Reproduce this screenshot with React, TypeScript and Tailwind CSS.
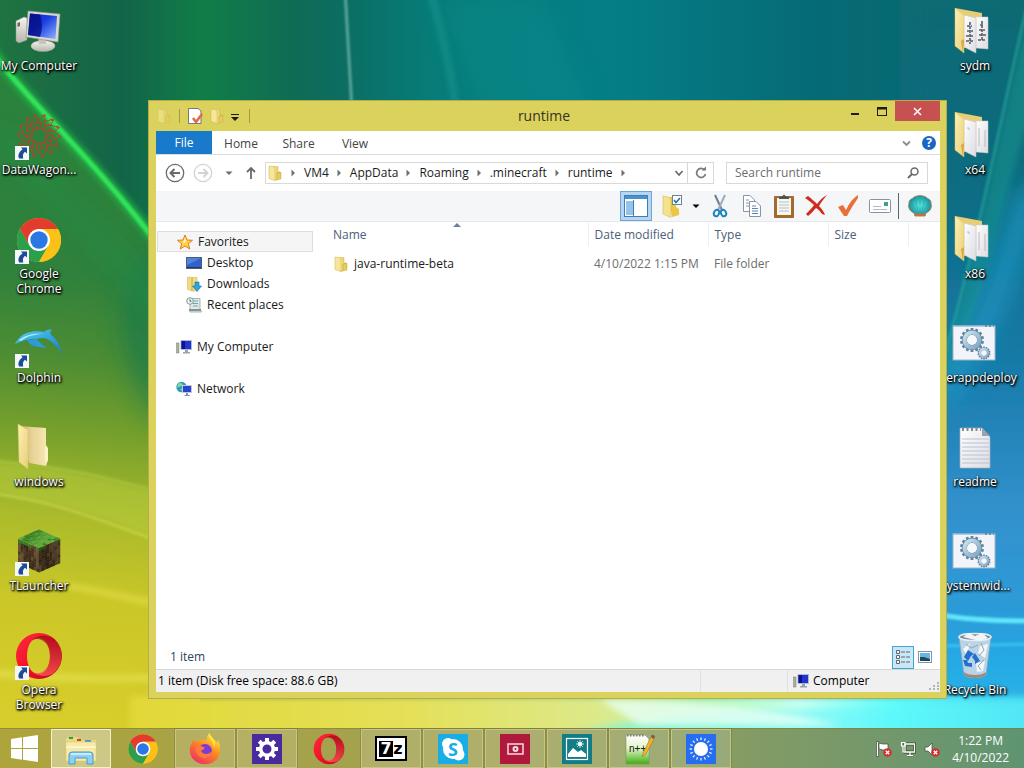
import { ReactNode } from "react";

type IconProps = { className?: string }

function Gradients() {
  return <svg width="0" height="0" className="absolute" aria-hidden="true">
    <defs>
      <linearGradient id="paper" x1="0" y1="0" x2="1" y2="1"><stop offset="0" stopColor="#ffffff" /><stop offset="1" stopColor="#dcdce2" /></linearGradient>
      <linearGradient id="flap" x1="0" y1="0" x2="1" y2="1"><stop offset="0" stopColor="#fdf1b4" /><stop offset="1" stopColor="#e9ce78" /></linearGradient>
      <linearGradient id="inner" x1="0" y1="0" x2="1" y2="0"><stop offset="0" stopColor="#cfb26c" /><stop offset="0.5" stopColor="#e9d499" /><stop offset="1" stopColor="#f7e9b5" /></linearGradient>
      <linearGradient id="tab" x1="0" y1="0" x2="1" y2="0"><stop offset="0" stopColor="#f7eaa2" /><stop offset="1" stopColor="#e0c24c" /></linearGradient>
      <linearGradient id="screen" x1="0" y1="0" x2="1" y2="1"><stop offset="0" stopColor="#0a1fae" /><stop offset="0.45" stopColor="#1c3fe0" /><stop offset="1" stopColor="#8fb6ff" /></linearGradient>
      <linearGradient id="metal" x1="0" y1="0" x2="0" y2="1"><stop offset="0" stopColor="#f6f6f2" /><stop offset="1" stopColor="#b5b5aa" /></linearGradient>
      <linearGradient id="opera" x1="0" y1="0" x2="1" y2="1"><stop offset="0" stopColor="#ff2a3c" /><stop offset="0.5" stopColor="#f3122a" /><stop offset="1" stopColor="#b00716" /></linearGradient>
      <linearGradient id="operaInner" x1="0" y1="0" x2="0" y2="1"><stop offset="0" stopColor="#9c0a14" /><stop offset="1" stopColor="#ff5b58" /></linearGradient>
      <linearGradient id="dolphin" x1="0" y1="0" x2="1" y2="1"><stop offset="0" stopColor="#53d0f5" /><stop offset="1" stopColor="#1a7bc4" /></linearGradient>
      <linearGradient id="cog" x1="0" y1="0" x2="1" y2="1"><stop offset="0" stopColor="#cfe2ee" /><stop offset="1" stopColor="#7ea6c2" /></linearGradient>
      <linearGradient id="fire" x1="0.8" y1="0" x2="0.2" y2="1"><stop offset="0" stopColor="#fff04a" /><stop offset="0.45" stopColor="#ff8a1f" /><stop offset="1" stopColor="#f02a6a" /></linearGradient>
      <linearGradient id="npp" x1="0" y1="0" x2="0" y2="1"><stop offset="0" stopColor="#ffffff" /><stop offset="0.45" stopColor="#e4f5cc" /><stop offset="1" stopColor="#3fae10" /></linearGradient>
      <radialGradient id="shell"><stop offset="0" stopColor="#58f0e4" /><stop offset="1" stopColor="#168f9c" /></radialGradient>
    </defs>
  </svg>;
}

function Wallpaper() {
  return <svg className="absolute inset-0 w-full h-full" viewBox="0 0 1024 768" preserveAspectRatio="none" aria-hidden="true">
    <defs>
      <linearGradient id="wpTop" x1="0" y1="0" x2="1" y2="0">
        <stop offset="0" stopColor="#1f7340" /><stop offset="0.12" stopColor="#126448" />
        <stop offset="0.2" stopColor="#107e48" /><stop offset="0.29" stopColor="#0f6b54" /><stop offset="0.34" stopColor="#0b6e64" />
        <stop offset="0.42" stopColor="#077c78" /><stop offset="0.6" stopColor="#057e86" />
        <stop offset="0.8" stopColor="#066a74" /><stop offset="1" stopColor="#0d6870" />
      </linearGradient>
      <linearGradient id="wpLeft" gradientUnits="userSpaceOnUse" x1="60" y1="60" x2="0" y2="768">
        <stop offset="0" stopColor="#2a823c" /><stop offset="0.3" stopColor="#2f813c" />
        <stop offset="0.42" stopColor="#4e8d33" /><stop offset="0.52" stopColor="#76a02c" />
        <stop offset="0.64" stopColor="#abbb2b" /><stop offset="0.76" stopColor="#cbc728" /><stop offset="1" stopColor="#ddd02c" />
      </linearGradient>
      <linearGradient id="wpRight" x1="0" y1="0" x2="0" y2="1">
        <stop offset="0" stopColor="#0d6a72" /><stop offset="0.25" stopColor="#0e6c80" />
        <stop offset="0.45" stopColor="#1478a4" /><stop offset="0.65" stopColor="#3290cc" />
        <stop offset="0.8" stopColor="#2b9dda" /><stop offset="0.83" stopColor="#24a8e4" /><stop offset="1" stopColor="#35c0ea" />
      </linearGradient>
      <linearGradient id="wpBottom" x1="0" y1="0" x2="1" y2="0">
        <stop offset="0" stopColor="#e2d838" /><stop offset="0.3" stopColor="#e4e058" />
        <stop offset="0.5" stopColor="#dde98a" /><stop offset="0.62" stopColor="#b6f7b4" />
        <stop offset="0.72" stopColor="#c4fff0" /><stop offset="0.82" stopColor="#5ffcfa" /><stop offset="1" stopColor="#40cdee" />
      </linearGradient>
      <filter id="soft1" filterUnits="userSpaceOnUse" x="-50" y="-50" width="1124" height="868"><feGaussianBlur stdDeviation="1" /></filter>
      <filter id="soft3" filterUnits="userSpaceOnUse" x="-50" y="-50" width="1124" height="868"><feGaussianBlur stdDeviation="3" /></filter>
      <filter id="soft12" filterUnits="userSpaceOnUse" x="-50" y="-50" width="1124" height="868"><feGaussianBlur stdDeviation="12" /></filter>
    </defs>
    <rect width="1024" height="768" fill="url(#wpTop)" />
    <path d="M-20 40 C40 115 100 175 160 250 L200 290 V790 H-20Z" fill="url(#wpLeft)" />
    <path d="M160 250 C120 260 100 330 160 430Z" fill="#1f7a48" filter="url(#soft12)" opacity="0.8" />
    <rect x="900" y="-20" width="160" height="808" fill="url(#wpRight)" filter="url(#soft12)" />
    <path d="M130 696 H1060 V790 H130Z" fill="url(#wpBottom)" filter="url(#soft3)" />
    <path d="M345 -10 L352 110" stroke="#7bbdb0" strokeWidth="3" fill="none" filter="url(#soft1)" opacity="0.7" />
    <path d="M430 -10 C445 40 452 80 458 120" stroke="#2fa9a0" strokeWidth="4" fill="none" filter="url(#soft3)" opacity="0.6" />
    <path d="M545 0 L590 110 H480 L440 0Z" fill="#0b9092" filter="url(#soft12)" opacity="0.35" />
    <path d="M-10 48 C30 105 90 155 160 246" stroke="#22b045" strokeWidth="10" fill="none" filter="url(#soft3)" />
    <path d="M-10 50 C30 103 90 155 160 247" stroke="#33e458" strokeWidth="5" fill="none" filter="url(#soft1)" />
    <path d="M0 130 C50 200 100 230 160 310" stroke="#22904a" strokeWidth="14" fill="none" filter="url(#soft12)" opacity="0.7" />
    <path d="M-20 460 C60 465 110 480 170 495 V545 C100 515 50 500 -20 492Z" fill="#b9cd3c" filter="url(#soft3)" opacity="0.5" />
    <path d="M-20 492 C60 500 110 525 170 545" stroke="#d3de52" strokeWidth="3" fill="none" filter="url(#soft1)" opacity="0.45" />
    <path d="M-20 460 C60 465 110 478 170 495" stroke="#bdd14e" strokeWidth="2" fill="none" filter="url(#soft1)" opacity="0.45" />
    <path d="M60 585 C100 590 130 600 170 605" stroke="#e6e24a" strokeWidth="5" fill="none" filter="url(#soft3)" opacity="0.8" />
    <path d="M-20 672 C60 680 110 678 170 678" stroke="#e6e452" strokeWidth="6" fill="none" filter="url(#soft3)" opacity="0.8" />
    <path d="M1030 10 C1000 120 985 230 945 350 V380 C990 300 1005 180 1030 120Z" fill="#17928c" filter="url(#soft3)" opacity="0.6" />
    <path d="M1026 10 C1000 120 985 210 945 355" stroke="#27a79a" strokeWidth="3" fill="none" filter="url(#soft1)" opacity="0.6" />
    <path d="M1030 190 C1005 280 985 330 940 400" stroke="#1d99c8" strokeWidth="18" fill="none" filter="url(#soft12)" />
    <path d="M940 615 C970 620 1000 621 1030 621" stroke="#62e6fa" strokeWidth="5" fill="none" filter="url(#soft1)" />
    <path d="M940 646 L1030 644" stroke="#38bff2" strokeWidth="3" fill="none" filter="url(#soft1)" />
    <path d="M560 735 C690 705 780 715 1030 700 V735Z" fill="#5df6fb" filter="url(#soft3)" opacity="0.5" />
    <path d="M600 700 C680 700 760 706 840 725 H640Z" fill="#e8fff6" filter="url(#soft3)" opacity="0.8" />
  </svg>;
}

function Shortcut() {
  return <svg className="absolute left-0 bottom-0 w-3.5 h-3.5" viewBox="0 0 14 14">
    <rect width="14" height="14" fill="#f5f8fb" />
    <path d="M6 1.500 H12 V7.500 L10 5.800 C8 7.500 7.500 9.500 8.300 12.500 H4 C2.600 9 4 5.500 7.600 3.400Z" fill="#1c4c96" />
  </svg>;
}

function ComputerIcon({ className }: IconProps) {
  return <svg className={className} viewBox="0 0 48 48">
    <path d="M1 13 L9 9 L12 10 V32 L4 35 L1 33Z" fill="url(#metal)" stroke="#99998f" strokeWidth="0.5" />
    <path d="M2.500 15 L5 14 V18 L2.500 19Z" fill="#68685f" />
    <ellipse cx="28" cy="38" rx="12" ry="5.500" fill="url(#metal)" stroke="#aaaaa0" strokeWidth="0.5" />
    <path d="M23 28 L31 29 V36 H24Z" fill="#c4c4ba" />
    <path d="M13 3 L45 6 L43 34 L11 29Z" fill="#d8d8d0" stroke="#96968e" strokeWidth="0.6" />
    <path d="M15 5.500 L42 8 L40.500 31 L13 27Z" fill="url(#screen)" />
    <path d="M15 5.500 L25 6.500 Q29 18 25 29 L13 27Z" fill="#040c80" opacity="0.75" />
  </svg>;
}

function DataWagonIcon({ className }: IconProps) {
  const spokes = Array.from({ length: 14 }, (_, i) => i * 26);
  return <svg className={className} viewBox="0 0 48 48" fill="none" stroke="#b8402c" strokeWidth="0.800">
    {spokes.map((a) => <g key={a} transform={`rotate(${a} 24 24)`}>
      <path d="M24 17 L19 12 L23 8 L20 3 M23 8 L28 4 M24 17 L27 11 L31 9" />
      <circle cx="20" cy="3" r="1" fill="#b8402c" stroke="none" />
      <circle cx="28" cy="4" r="1" fill="#b8402c" stroke="none" />
      <circle cx="19" cy="12" r="1" fill="#b8402c" stroke="none" />
    </g>)}
    <circle cx="24" cy="24" r="7" strokeWidth="1" strokeDasharray="5 2" />
  </svg>;
}

function ChromeIcon({ className }: IconProps) {
  return <svg className={className} viewBox="0 0 48 48">
    <circle cx="24" cy="24" r="22" fill="#fbc116" />
    <path d="M4.950 13 A22 22 0 0 1 43.050 13 H24 L14.470 29.500Z" fill="#e33b2e" />
    <path d="M4.950 13 A22 22 0 0 0 24 46 L33.500 29.500 L24 35 L14.470 29.500Z" fill="#2b9f4b" />
    <path d="M24 46 A22 22 0 0 0 43.050 13 H24 L33.500 29.500Z" fill="#fbc116" />
    <circle cx="24" cy="24" r="11" fill="#ffffff" />
    <circle cx="24" cy="24" r="8.700" fill="#2b78e4" />
  </svg>;
}

function DolphinIcon({ className }: IconProps) {
  return <svg className={className} viewBox="0 -8 48 48">
    <path d="M0 16 C3 10 8 6 13 4.500 C19 3 25 3 29 4 C31 2 34 1 37 2 C35 3 35 5 36 7 C42 11 45 17 47 27 C43 19 38 14 32 11 C28 9.500 25 10 22 11 C15 10 7 13 0 16Z" fill="url(#dolphin)" />
    <path d="M4 12 C12 6 20 5 29 6 C20 6 12 8 6 13Z" fill="#b5ecff" />
    <path d="M12 12 C15 18 21 19 32 20 C27 17 25 14 21 11Z" fill="#2e9bd9" />
  </svg>;
}

function OpenFolderIcon({ className }: IconProps) {
  return <svg className={className} viewBox="0 0 48 48">
    <path d="M4 2 L31 4 V21 L33 24 V36 L31 42 L14 39Z" fill="url(#inner)" />
    <path d="M30 22 L33 25 V37 L30 38Z" fill="#fbf2c8" />
    <path d="M3 0 L13 6 V45 L4 38Z" fill="url(#flap)" stroke="#d9be68" strokeWidth="0.5" />
  </svg>;
}

function StuffedFolderIcon({ className, pictures }: IconProps & { pictures?: boolean }) {
  return <svg className={className} viewBox="0 0 48 48">
    <path d="M4 0 L31 5 V12 L14 40 L4 38Z" fill="#e8cd77" />
    <path d="M25 9 L37 9 V41 L25 40Z" fill="url(#paper)" stroke="#cccccc" strokeWidth="0.5" />
    <path d="M13 7 L25 10 V45 L13 39Z" fill="url(#paper)" stroke="#c2c2c2" strokeWidth="0.5" />
    {pictures ? <path d="M19 14 V36 M16 18 h5 M16 23 h6 M15 28 h7 M15 33 h8 M31 13 V33 M29 17 h4 M28 22 h6 M28 27 h7 M27 32 h8" stroke="#585d62" strokeWidth="1.600" strokeDasharray="3 1" fill="none" /> : <path d="M17 15 v2 h2 M28 16 v18 M34 18 v17" stroke="#b9b9c0" fill="none" />}
    <path d="M4 0 L13 7 V45 L4 38Z" fill="url(#flap)" stroke="#dcc26a" strokeWidth="0.5" />
    <path d="M13 31 L10 33 L12 45Z" fill="#dca73b" />
  </svg>;
}

const mud = Array.from({ length: 64 }, (_, i) => ({ x: i % 8, y: Math.floor(i / 8), n: (i * i * 7 + i * 13 + Math.floor(i / 5)) % 5 }));
const grassColors = ["#3f8a2e", "#5dab3f", "#4b9a36", "#357a28", "#5aa442"];
const mudColors = ["#4b3726", "#5f4732", "#38291c", "#67503a", "#43311f"];

function GrassBlockIcon({ className }: IconProps) {
  return <svg className={className} viewBox="0 0 48 48">
    <g transform="matrix(2.625 1.125 0 3 3 11)">{mud.map(({ x, y, n }) => <rect key={y * 8 + x} x={x} y={y} width="1.100" height="1.100" fill={y + n % 2 < 1 ? grassColors[3] : mudColors[n]} />)}</g>
    <g transform="matrix(2.625 -1.125 0 3 24 20)">{mud.map(({ x, y, n }) => <rect key={y * 8 + x} x={x} y={y} width="1.100" height="1.100" fill={y + n % 3 < 1 ? "#2d661f" : mudColors[(n + 2) % 5]} />)}</g>
    <g transform="matrix(2.625 1.125 -2.625 1.125 24 1.500)">{mud.map(({ x, y, n }) => <rect key={y * 8 + x} x={x} y={y} width="1.100" height="1.100" fill={grassColors[n]} />)}</g>
    <path d="M24 20 L45 11 V35 L24 45Z" fill="#000000" opacity="0.2" />
  </svg>;
}

function OperaIcon({ className }: IconProps) {
  return <svg className={className} viewBox="0 0 48 48">
    <path fillRule="evenodd" d="M24 1 A23 23 0 1 0 24 47 A23 23 0 1 0 24 1Z M24 6 C31 6 35 14 35 24 C35 34 31 42 24 42 C16 42 12 34 12 24 C12 14 16 6 24 6Z" fill="url(#opera)" />
    <path d="M17 8 C24 2 33 3 39 7 A23 23 0 0 1 39 41 C33 45 24 45 17 40 C26 44 35 37 35 24 C35 11 26 4 17 8Z" fill="url(#operaInner)" opacity="0.75" />
  </svg>;
}

function Gear({ cx, cy, r }: { cx: number, cy: number, r: number }) {
  const teeth = Array.from({ length: 14 }, (_, i) => i * 360 / 14);
  return <g transform={`translate(${cx} ${cy})`}>
    {teeth.map((a) => <rect key={a} x={-r * 0.12} y={-r} width={r * 0.24} height={r * 0.4} transform={`rotate(${a})`} fill="#5f87a2" />)}
    <circle r={r * 0.62} fill="none" stroke="#5f87a2" strokeWidth={r * 0.46} />
    <circle r={r * 0.62} fill="none" stroke="url(#cog)" strokeWidth={r * 0.34} />
    <circle r={r * 0.42} fill="#f6f9fc" />
  </g>;
}

function BatchIcon({ className }: IconProps) {
  return <svg className={className} viewBox="0 0 48 48">
    <rect x="2" y="6" width="42" height="34" fill="#f3f4fa" stroke="#9fb4c4" />
    <path d="M2 6 H44" stroke="#9ac0da" />
    <path d="M34 6 h2 M38 6 h2 M42 6 h1" stroke="#4b5c70" strokeWidth="1" />
    <Gear cx={21} cy={20} r={12} />
    <Gear cx={33} cy={33} r={6.500} />
  </svg>;
}

function TextFileIcon({ className }: IconProps) {
  return <svg className={className} viewBox="0 0 48 48">
    <path d="M9 4 H31 L39 13 V44 H9Z" fill="url(#paper)" stroke="#a8aeb8" strokeWidth="0.700" />
    <path d="M11 15 H38 M11 19 H38 M11 23 H38 M11 27 H38 M11 31 H38 M11 35 H38 M11 39 H38" stroke="#b7c3d6" strokeWidth="1" />
    <path d="M31 4 V12 H39Z" fill="#9aa1ac" />
    <path d="M11 5.500 H30" stroke="#818a98" strokeWidth="3" strokeDasharray="2 2.500" />
  </svg>;
}

function RecycleIcon({ className }: IconProps) {
  return <svg className={className} viewBox="0 0 48 48">
    <path d="M8 5 L40 5 L35 43 C31 47 17 47 13 43Z" fill="#cbd9e5" opacity="0.9" stroke="#8ca3b6" strokeWidth="0.700" />
    <path d="M13 40 C17 44 31 44 35 40 L35 43 C31 47 17 47 13 43Z" fill="#a08a7d" />
    <ellipse cx="24" cy="5" rx="16" ry="3.500" fill="#7c8995" stroke="#e6edf3" strokeWidth="1.500" />
    <path d="M12 5 L18 1 L24 4 L31 1 L37 6 L29 9 L20 7Z" fill="#f1f4f8" />
    <path d="M29 14 L37 12 L34 26 L27 21Z M25 31 L34 29 L32 39 L26 40Z M12 17 L19 11 L16 24Z" fill="#ffffff" opacity="0.8" />
    <path d="M30 11 L33 18 L28 24 M15 12 L20 16 L27 13 M33 28 L27 34 L30 38" stroke="#94a5b3" fill="none" />
    <path d="M13 25 L17 18 L23 22 L20 24 L17 29Z M24 21 L29 29 L24 32 L24 29 L21 25Z M21 35 L14 34 L12 28 L16 28 L17 31 L21 31Z" fill="#256fd0" />
  </svg>;
}

function FolderIcon({ className }: IconProps) {
  return <svg className={className} viewBox="0 0 16 16">
    <path d="M6 1.500 H11 V6.500 L14 7.500 V14 L8 15.500 L6 13Z" fill="url(#tab)" stroke="#cfb24d" strokeWidth="0.500" />
    <path d="M2 1 L6 1.500 L8 3 V15.500 L2 13.500Z" fill="#f6e798" stroke="#cfb24d" strokeWidth="0.500" />
    <path d="M10 8 V15 M10 8 L14 7.500" stroke="#c8a838" strokeWidth="0.700" fill="none" />
  </svg>;
}

function CheckSheetIcon({ className }: IconProps) {
  return <svg className={className} viewBox="0 0 16 16">
    <path d="M1.500 0.500 H11 L14 3 V15.500 H1.500Z" fill="#ffffff" stroke="#77777c" />
    <path d="M6 10 L9 14 L15 6" stroke="#e06a4c" strokeWidth="2.500" fill="none" />
  </svg>;
}

function SmallComputerIcon({ className }: IconProps) {
  return <svg className={className} viewBox="0 0 16 16">
    <rect x="0.500" y="4" width="2.500" height="10" fill="#a9b09c" stroke="#7d8273" strokeWidth="0.500" />
    <path d="M5 1.500 H15.500 V10.500 H5Z" fill="#2233cf" stroke="#b3b9c4" />
    <path d="M5.500 2 H9 V10 H5.500Z" fill="#0b1290" />
    <path d="M9 11 H12 V13 H14 V14.500 H7 V13 H9Z" fill="#9aa2ad" />
  </svg>;
}

function NetworkIcon({ className }: IconProps) {
  return <svg className={className} viewBox="0 0 16 16">
    <circle cx="5.500" cy="6" r="5.200" fill="#2d9bb5" />
    <path d="M2 3 C4 1 6 2 7 4 C5 6 3 5 1 7Z M4 8 L8 7 L7 11Z" fill="#7fdc9e" />
    <rect x="6.500" y="4.500" width="9" height="7" fill="#2545d8" stroke="#c2cada" />
    <path d="M10 12 H12 V14 H14 V15 H8.500 V14 H10Z" fill="#8592a8" />
  </svg>;
}

function StarIcon({ className }: IconProps) {
  return <svg className={className} viewBox="0 0 16 16">
    <path d="M8 1 L10 6 L15.500 6.300 L11.300 9.700 L12.800 15 L8 12 L3.200 15 L4.700 9.700 L0.500 6.300 L6 6Z" fill="#ffd04a" stroke="#e07b1f" />
    <path d="M8 3.500 L9.300 7 L6 10 L6.700 7Z" fill="#fff3b8" />
  </svg>;
}

function DesktopIcon({ className }: IconProps) {
  return <svg className={className} viewBox="0 0 16 16">
    <rect x="0.500" y="2.500" width="15" height="11" fill="#2f62cd" stroke="#4c5c7d" />
    <path d="M1 3 H15 L1 10Z" fill="#6a99ee" opacity="0.600" />
    <path d="M1 12.500 H15" stroke="#26384f" />
  </svg>;
}

function DownloadsIcon({ className }: IconProps) {
  return <svg className={className} viewBox="0 0 16 16">
    <path d="M1.500 1 L6 1.500 H11 V13 L8 15.500 L1.500 13.500Z" fill="#f1dc82" stroke="#cdb04e" strokeWidth="0.500" />
    <path d="M6 1.500 V15" stroke="#c6a948" />
    <path d="M9 6 H13 V10 H15.500 L11 15.500 L6.500 10 H9Z" fill="#31a3e0" stroke="#176d9f" strokeWidth="0.600" />
  </svg>;
}

function RecentIcon({ className }: IconProps) {
  return <svg className={className} viewBox="0 0 16 16">
    <path d="M4 1.500 H14 V12 L15.500 15 H4Z" fill="#dfe9ea" stroke="#8b9a9c" strokeWidth="0.700" />
    <path d="M7 4 H12 M7 6.500 H12 M7 9 H12" stroke="#6fa9a4" />
    <path d="M3 13 H15" stroke="#899091" strokeWidth="2" />
    <circle cx="4" cy="4" r="3.300" fill="#eef2f3" stroke="#88969a" />
    <path d="M4 2.300 V4.300 H5.500" stroke="#5b6669" fill="none" />
  </svg>;
}

function Caret({ className = "w-2 h-2" }: IconProps) {
  return <svg className={className} viewBox="0 0 8 8" fill="currentColor"><path d="M0.500 2.500 H7.500 L4 6Z" /></svg>;
}

function CrumbArrow() {
  return <svg className="w-[21px] h-2 text-[#6f6f6f]" viewBox="0 0 21 8" fill="currentColor"><path d="M8.500 0.500 L12 4 L8.500 7.500Z" /></svg>;
}

function DesktopItem({ label, icon, shortcut }: { label: string, icon: ReactNode, shortcut?: boolean }) {
  return <button className="h-[104px] pt-2 flex flex-col items-center gap-0.5 text-white">
    <span className="relative w-12 h-12 flex justify-center">
      {icon}
      {shortcut && <Shortcut />}
    </span>
    <span className="text-xs leading-[15px] whitespace-pre text-center [text-shadow:1px_1px_2px_#000000,0_1px_2px_#000000,1px_1px_3px_#000000]">{label}</span>
  </button>;
}

function ToolButton({ label, children, active }: { label: string, children: ReactNode, active?: boolean }) {
  const look = active ? "bg-[#b7d5f1] border border-[#6da6dc] mr-1" : "";
  return <button aria-label={label} className={`w-8 h-[30px] flex items-center justify-center ${look}`}>{children}</button>;
}

function TitleBar() {
  return <header className="h-[30px] grid grid-cols-[1fr_auto_1fr] items-center">
    <div className="flex items-center gap-1.5">
      <FolderIcon className="w-4 h-4 opacity-60" />
      <span className="w-px h-3.5 mx-px bg-[#a19a46]" />
      <button aria-label="Properties"><CheckSheetIcon className="w-4 h-4" /></button>
      <button aria-label="New folder"><FolderIcon className="w-4 h-4" /></button>
      <button aria-label="Customize toolbar">
        <svg className="w-2 h-3" viewBox="0 0 8 12"><path d="M0 4.500 H8" stroke="#1b1b14" /><path d="M0 7 H8 L4 11Z" fill="#1b1b14" /></svg>
      </button>
      <span className="w-px h-3.5 ml-1 bg-[#a19a46]" />
    </div>
    <h1 className="text-sm text-[#35341c] pr-2">runtime</h1>
    <div className="self-start flex justify-end text-[#1f1e10]">
      <button aria-label="Minimize" className="w-[27px] h-5"><svg className="w-full h-full" viewBox="0 0 27 20"><path d="M10 13 H18" stroke="currentColor" strokeWidth="2" /></svg></button>
      <button aria-label="Maximize" className="w-[27px] h-5"><svg className="w-full h-full" viewBox="0 0 27 20" fill="none" stroke="currentColor"><rect x="9.500" y="6.500" width="9" height="8" /><path d="M9 7.500 H19" strokeWidth="2" /></svg></button>
      <button aria-label="Close" className="w-[45px] h-5 bg-[#c75050] text-white"><svg className="w-full h-full" viewBox="0 0 45 20"><path d="M19 7 L26 14 M26 7 L19 14" stroke="currentColor" strokeWidth="1.500" /></svg></button>
    </div>
  </header>;
}

function Ribbon() {
  return <nav className="h-6 flex items-stretch border-b border-[#dadbdc] text-[#444444]">
    <button className="w-14 bg-[#1979ca] text-white">File</button>
    <button className="w-[58px] pt-0.5">Home</button>
    <button className="w-[57px] pt-0.5">Share</button>
    <button className="w-[56px] pt-0.5">View</button>
    <div className="ml-auto flex items-center gap-2 pr-1">
      <button aria-label="Expand ribbon"><svg className="w-4 h-4" viewBox="0 0 16 16"><path d="M5 6.500 L8.500 10 L12 6.500" stroke="#8c8c8c" strokeWidth="1.800" fill="none" /></svg></button>
      <button aria-label="Help" className="w-3.5 h-3.5 rounded-full bg-[#1b66c4] text-white font-bold leading-[14px]">?</button>
    </div>
  </nav>;
}

const path = ["VM4", "AppData", "Roaming", ".minecraft", "runtime"];

function AddressRow() {
  return <div className="h-9 flex items-center gap-2 pl-[9px] pr-3">
    <button aria-label="Back"><svg className="w-5 h-5" viewBox="0 0 20 20" fill="none" stroke="#6a6a6a"><circle cx="10" cy="10" r="8.700" strokeWidth="1.300" /><path d="M15 10 H6 M9.500 6 L5.500 10 L9.500 14" strokeWidth="2" /></svg></button>
    <button aria-label="Forward"><svg className="w-5 h-5" viewBox="0 0 20 20" fill="none" stroke="#d2d2d2"><circle cx="10" cy="10" r="8.700" strokeWidth="1.300" /><path d="M5 10 H14 M10.500 6 L14.500 10 L10.500 14" strokeWidth="2" /></svg></button>
    <button aria-label="Recent locations" className="w-4 flex justify-center text-[#6c6c6c]"><Caret /></button>
    <button aria-label="Up"><svg className="w-3 h-4" viewBox="0 0 12 16" fill="none" stroke="#6a6a6a" strokeWidth="1.800"><path d="M6 14 V3 M2 7 L6 3 L10 7" /></svg></button>
    <div className="flex-1 h-[22px] flex items-center border border-[#d9d9d9] text-[#1c1c1c]">
      <FolderIcon className="w-4 h-4 ml-px" />
      {path.map((folder) => <span key={folder} className="flex items-center"><CrumbArrow /><button>{folder}</button></span>)}
      <CrumbArrow />
      <button aria-label="Previous locations" className="ml-auto w-4 flex justify-center"><svg className="w-2.5 h-2.5" viewBox="0 0 10 10"><path d="M1.500 3 L5 7 L8.500 3" stroke="#666666" strokeWidth="1.600" fill="none" /></svg></button>
      <button aria-label="Refresh" className="w-[26px] h-full border-l border-[#d9d9d9] flex items-center justify-center">
        <svg className="w-3.5 h-3.5" viewBox="0 0 14 14"><path d="M10.500 4 A4.500 4.500 0 1 0 11.500 8" stroke="#7a7a7a" strokeWidth="1.700" fill="none" /><path d="M7.500 4.500 H12 V0.500Z" fill="#7a7a7a" /></svg>
      </button>
    </div>
    <div className="w-[202px] h-[22px] ml-1 flex items-center border border-[#d9d9d9] px-2">
      <input type="search" aria-label="Search runtime" placeholder="Search runtime" className="flex-1 min-w-0 outline-none placeholder:text-[#6d6d6d]" />
      <svg className="w-3 h-3" viewBox="0 0 12 12" fill="none" stroke="#6a6a6a"><circle cx="7.500" cy="4.500" r="3.500" strokeWidth="1.500" /><path d="M5 7 L1 11" strokeWidth="2" /></svg>
    </div>
  </div>;
}

function Toolbar() {
  return <div className="h-[31px] flex items-center justify-end pr-1 bg-[#f4f6f8] border-b border-[#e6e9ec]">
    <ToolButton label="Navigation pane" active>
      <svg className="w-6 h-6" viewBox="0 0 24 24"><rect x="0.500" y="1.500" width="23" height="21" fill="#ffffff" stroke="#3f7fb4" /><path d="M1 3.500 H23" stroke="#4a90cc" strokeWidth="3" /><rect x="2" y="7" width="7" height="14" fill="#94c3ee" /><path d="M9.500 6 V22" stroke="#3f7fb4" /></svg>
    </ToolButton>
    <ToolButton label="Folder options">
      <svg className="w-6 h-6" viewBox="0 0 24 24"><path d="M9 3 H16 V13 L19 15 V21 L12 23Z" fill="#e8c845" /><path d="M3 2 L8 3 L11 5 V23.500 L3 20Z" fill="#f4e28f" stroke="#d2b24a" strokeWidth="0.500" /><rect x="12.500" y="1.500" width="9" height="9" fill="#ffffff" stroke="#71828f" /><path d="M14 6 L16 8.500 L20 4" stroke="#2268b5" strokeWidth="1.500" fill="none" /></svg>
    </ToolButton>
    <button aria-label="More options" className="w-4 flex justify-center"><Caret /></button>
    <ToolButton label="Cut">
      <svg className="w-6 h-6" viewBox="0 0 24 24" fill="none"><path d="M7 1 L14 16" stroke="#6e7f92" strokeWidth="2" /><path d="M17 1 L10 16" stroke="#9badbf" strokeWidth="2" /><ellipse cx="8.500" cy="19" rx="2.500" ry="3.300" transform="rotate(25 8.500 19)" stroke="#1a86be" strokeWidth="2" /><ellipse cx="15.500" cy="19" rx="2.500" ry="3.300" transform="rotate(-25 15.500 19)" stroke="#1a86be" strokeWidth="2" /></svg>
    </ToolButton>
    <ToolButton label="Copy">
      <svg className="w-6 h-6" viewBox="0 0 24 24" fill="#ffffff" stroke="#8796a6"><path d="M3.500 1.500 H10 L14.500 6 V17.500 H3.500Z" /><path d="M6 6 H9 M6 9 H9 M6 12 H9" /><path d="M9.500 7.500 H16 L20.500 12 V22.500 H9.500Z" /><path d="M12 12 H16 M12 14.500 H18 M12 17 H18 M12 19.500 H18" stroke="#5c86b2" /></svg>
    </ToolButton>
    <ToolButton label="Paste">
      <svg className="w-6 h-6" viewBox="0 0 24 24"><rect x="2" y="2" width="20" height="22" rx="1" fill="#a5682f" /><rect x="5" y="4" width="14" height="17" fill="#f8f8f3" /><path d="M7 8 H17 M7 11 H17 M7 14 H17 M7 17 H17" stroke="#b7bcc3" /><path d="M7 5 V3 L10 2.500 L12 0.500 L14 2.500 L17 3 V5Z" fill="#4e5358" /></svg>
    </ToolButton>
    <ToolButton label="Delete">
      <svg className="w-6 h-6" viewBox="0 0 24 24"><path d="M1 4 L4 2 C8 5 11 8 13 10 C16 6 19 3 23 1 C20 5 17 8 15 12 C18 15 20 18 21 21 L18 20 C16 17 14 15 12 14 C9 17 7 20 4 22 L2 20 C5 17 8 14 10 11 C7 8 4 6 1 4Z" fill="#cf2a1e" /></svg>
    </ToolButton>
    <ToolButton label="Rename">
      <svg className="w-6 h-6" viewBox="0 0 24 24"><path d="M2 13 L7 11 L10 16 C13 9 17 4 22 1 L22 4 C18 10 14 16 11 22 H8Z" fill="#e8703a" /></svg>
    </ToolButton>
    <ToolButton label="Email">
      <svg className="w-6 h-6" viewBox="0 0 24 24"><rect x="1.500" y="5.500" width="21" height="13" rx="1" fill="#ffffff" stroke="#8394a3" /><rect x="16" y="8" width="4" height="4" fill="#3fa08d" /><path d="M5 12.500 H13 M5 15.500 H19" stroke="#b0b9c2" /></svg>
    </ToolButton>
    <span className="w-px h-[26px] ml-0.5 mr-[5px] bg-[#596672]" />
    <ToolButton label="Classic Shell">
      <svg className="w-6 h-6" viewBox="0 0 24 24"><path d="M6 19 C1 17 0 13 1 9 C1 5 4 5 5 4 C7 2 9 2 12 1.500 C15 2 17 2 19 4 C20 5 23 5 23 9 C24 13 23 17 18 19 L17 22 H7Z" fill="url(#shell)" stroke="#b08a5e" /><path d="M12 20 V3 M11 20 L7 4 M13 20 L17 4 M10 20 L3 8 M14 20 L21 8 M9 20 L3 14 M15 20 L21 14" stroke="#2aa3ac" strokeWidth="0.600" /><path d="M7 19.500 H17 V22 H7Z" fill="#bd7444" /></svg>
    </ToolButton>
  </div>;
}

function NavItem({ label, icon, child }: { label: string, icon: ReactNode, child?: boolean }) {
  return <button className={`w-full h-[21px] flex items-center gap-[5px] ${child ? "pl-[29px]" : "pl-[19px]"}`}>{icon}{label}</button>;
}

function NavPane() {
  return <aside className="w-[157px] pt-[9px] pl-px flex flex-col text-[#1a1a1a]">
    <div className="border border-[#dedede] bg-[#f5f5f5] h-[21px] flex items-center"><NavItem label="Favorites" icon={<StarIcon className="w-4 h-4" />} /></div>
    <NavItem child label="Desktop" icon={<DesktopIcon className="w-4 h-4" />} />
    <NavItem child label="Downloads" icon={<DownloadsIcon className="w-4 h-4" />} />
    <NavItem child label="Recent places" icon={<RecentIcon className="w-4 h-4" />} />
    <div className="h-[21px]" />
    <NavItem label="My Computer" icon={<SmallComputerIcon className="w-4 h-4" />} />
    <div className="h-[21px]" />
    <NavItem label="Network" icon={<NetworkIcon className="w-4 h-4" />} />
  </aside>;
}

function FileList() {
  return <div className="flex-1 relative">
    <svg className="absolute left-[140px] top-px w-2 h-1" viewBox="0 0 8 4"><path d="M0 4 L4 0 L8 4Z" fill="#6b7f99" /></svg>
    <table className="w-full table-fixed text-left">
      <thead>
        <tr className="h-6 text-[#4c607a] [&>th]:font-normal [&>th]:pt-0.5 [&>th]:border-r [&>th]:border-[#eceff3]">
          <th className="pl-5">Name</th>
          <th className="w-[120px] pl-1.5">Date modified</th>
          <th className="w-[120px] pl-1.5">Type</th>
          <th className="w-[80px] pl-1.5">Size</th>
          <td className="w-8" />
        </tr>
      </thead>
      <tbody>
        <tr className="h-9 text-[#6d6d6d]">
          <td className="pl-5"><span className="flex items-center gap-[5px] text-[#1a1a1a]"><FolderIcon className="w-4 h-4" />java-runtime-beta</span></td>
          <td className="pl-1.5 whitespace-nowrap">4/10/2022 1:15 PM</td>
          <td className="pl-1.5">File folder</td>
          <td />
          <td />
        </tr>
      </tbody>
    </table>
  </div>;
}

function ExplorerWindow() {
  return <section className="absolute top-[100px] left-[148px] right-[77px] bottom-[29px] flex flex-col border border-[#b5ad49] bg-[#dbd25e] pl-[7px] pr-1.5 pb-1.5">
    <TitleBar />
    <div className="flex-1 flex flex-col bg-white">
      <Ribbon />
      <AddressRow />
      <Toolbar />
      <div className="flex-1 flex">
        <NavPane />
        <FileList />
      </div>
      <div className="h-6 flex items-center pl-3.5 text-[#2c4361]">
        <span>1 item</span>
        <button aria-label="Details view" className="ml-auto w-[22px] h-[23px] flex items-center justify-center border border-[#3fa6cf] bg-[#c8e8f6]">
          <svg className="w-4 h-4" viewBox="0 0 16 16" stroke="#5c6470" fill="#ffffff"><path d="M1.500 1.500 h3 v3 h-3Z M1.500 6.500 h3 v3 h-3Z M1.500 11.500 h3 v3 h-3Z" /><path d="M6 3 H15 M6 8 H15 M6 13 H15" strokeDasharray="4 1" /></svg>
        </button>
        <button aria-label="Large icons view" className="w-[22px] flex items-center justify-center mr-1">
          <svg className="w-3.5 h-3" viewBox="0 0 14 12"><rect x="0.500" y="0.500" width="13" height="11" fill="#ffffff" stroke="#8695a5" /><rect x="2" y="2" width="10" height="8" fill="#6bb5e4" /><path d="M2 6 L6 6 L12 8 V10 H2Z" fill="#214862" /></svg>
        </button>
      </div>
      <footer className="h-[23px] flex items-stretch bg-[#f0f0f0] border-t border-[#d7d7d7]">
        <span className="flex-1 pl-0.5 flex items-center">1 item (Disk free space: 88.6 GB)</span>
        <span className="w-[88px] border-x border-[#e0e0e0]" />
        <span className="w-[152px] pl-[5px] flex items-center gap-1 relative"><SmallComputerIcon className="w-4 h-4" />Computer
          <svg className="absolute right-0 bottom-0 w-3 h-3" viewBox="0 0 12 12" fill="#b4b4b4"><path d="M9 2h2v2h-2Z M5 5h2v2h-2Z M9 5h2v2h-2Z M1 8h2v2h-2Z M5 8h2v2h-2Z M9 8h2v2h-2Z" /></svg>
        </span>
      </footer>
    </div>
  </section>;
}

function TaskButton({ label, icon, open, active }: { label: string, icon: ReactNode, open?: boolean, active?: boolean }) {
  let look = "border-transparent";
  if (open) look = "border-[#c6c585] bg-white/15 outline outline-[#74732f]/40 -outline-offset-0";
  if (active) look = "border-[#f4f1c0] bg-[#cdc886]";
  return <button aria-label={label} className={`w-[60px] h-full flex items-center justify-center border ${look}`}>{icon}</button>;
}

function ExplorerIcon() {
  return <svg className="w-8 h-8" viewBox="0 0 32 32">
    <path d="M1 5 L12 4 L14 7 H31 V28 H1Z" fill="#efd97f" />
    <path d="M4 4 H8 V6 H4Z" fill="#2e9e46" /><path d="M12 6 H16 V8 H12Z" fill="#d14532" /><path d="M20 7 H26 V10 H20Z" fill="#4d95d8" />
    <path d="M1 9 H31 V28 H1Z" fill="#f7e9a6" stroke="#dfc665" strokeWidth="0.500" />
    <path d="M1 14 H31" stroke="#fbf4cc" strokeWidth="2" />
    <path d="M4 31 V22 Q4 19 7 19 H25 Q28 19 28 22 V31 H22 V25 H10 V31Z" fill="#8fcff3" stroke="#439cd2" />
    <path d="M6 21 H26" stroke="#dcf4ff" strokeWidth="1.500" />
  </svg>;
}

function FirefoxIcon() {
  return <svg className="w-8 h-8" viewBox="0 0 32 32">
    <path d="M4 6 C5 8 6 8 8 9 C11 6 15 6 18 8 C17 5 19 2 20 0 C21 4 26 6 28 10 L29 7 C32 13 32 20 28 26 C22 33 10 33 4 26 C0 21 0 14 3 10Z" fill="url(#fire)" />
    <circle cx="16" cy="18" r="7" fill="#7b3bd4" />
    <path d="M7 14 C10 12 12 13 14 14 C16 14 16 15 15 16 L12 18 C14 22 20 22 23 18 C23 25 15 27 10 23 C7 21 6 17 7 14Z" fill="#ff7a38" />
    <path d="M20 0 C19 5 25 8 25 15 C27 12 26 9 25 7Z" fill="#ffe93d" />
  </svg>;
}

function GearTile() {
  const teeth = Array.from({ length: 8 }, (_, i) => i * 45);
  return <svg className="w-[30px] h-[30px]" viewBox="0 0 30 30">
    <rect width="30" height="30" fill="#4a2b9f" />
    <g transform="translate(15 15)">
      {teeth.map((a) => <rect key={a} x="-2" y="-11" width="4" height="5" fill="#ffffff" transform={`rotate(${a})`} />)}
      <circle r="6.300" fill="none" stroke="#ffffff" strokeWidth="3.600" />
    </g>
  </svg>;
}

function SevenZipIcon() {
  return <span className="w-8 h-[25px] flex items-center justify-center border-2 border-black bg-white font-['DejaVu_Sans'] font-bold text-base leading-4">
    <span className="w-3.5 h-4 bg-black text-white">7</span>
    <span className="w-2.5 h-4 text-black">z</span>
  </span>;
}

function SkypeIcon() {
  return <span className="w-[30px] h-[30px] bg-[#17ade6] flex items-center justify-center relative">
    <svg className="absolute inset-0" viewBox="0 0 30 30"><circle cx="15" cy="15" r="10" fill="#ffffff" /><circle cx="10" cy="10" r="6" fill="#ffffff" /><circle cx="20.500" cy="20.500" r="6" fill="#ffffff" /></svg>
    <span className="relative text-lg leading-5 font-bold text-[#17ade6]">S</span>
  </span>;
}

function CameraTile() {
  return <svg className="w-[30px] h-[30px]" viewBox="0 0 30 30"><rect width="30" height="30" fill="#b0193c" /><rect x="8" y="10" width="15" height="10" fill="none" stroke="#f4dce1" strokeWidth="1.500" /><circle cx="15.500" cy="15" r="2" fill="none" stroke="#f4dce1" strokeWidth="2" /></svg>;
}

function PhotoTile() {
  return <svg className="w-[30px] h-[30px]" viewBox="0 0 30 30"><rect width="30" height="30" fill="#127c87" /><rect x="4.500" y="4.500" width="21" height="21" fill="none" stroke="#ffffff" strokeWidth="1.200" /><path d="M6 20 L11 14 L16 18 L19 16 L24 20 V23 H6Z" fill="#ffffff" /><circle cx="18" cy="10" r="2" fill="#ffffff" /><path d="M18 6 V14 M14 10 H22 M15.200 7.200 L20.800 12.800 M20.800 7.200 L15.200 12.800" stroke="#ffffff" strokeWidth="0.800" /></svg>;
}

function NotepadIcon() {
  return <svg className="w-8 h-8" viewBox="0 0 32 32">
    <path d="M3 2 H22 L26 6 V31 H3Z" fill="url(#npp)" stroke="#87916f" strokeWidth="0.600" />
    <path d="M4 2.500 H22" stroke="#7d7d7d" strokeWidth="2" strokeDasharray="1.500 1.500" />
    <text x="6" y="19" fontSize="10" fill="#16200e" fontFamily="Liberation Sans">n++</text>
    <path d="M19 24 L20 20 L28 4 L31 6 L23 21Z" fill="#f0b52a" stroke="#8f6d20" strokeWidth="0.500" /><path d="M28 4 L29 1.500 L32 3 L31 6Z" fill="#8c5148" />
  </svg>;
}

function SunTile() {
  const rays = Array.from({ length: 16 }, (_, i) => i * 22.5);
  return <svg className="w-[30px] h-[30px]" viewBox="0 0 30 30"><rect width="30" height="30" fill="#276df0" /><circle cx="15" cy="15" r="7" fill="#ffffff" />
    {rays.map((a) => <path key={a} d="M15 3.500 V6" stroke="#ffffff" strokeWidth="1.200" transform={`rotate(${a} 15 15)`} />)}
  </svg>;
}

function ErrorBadge() {
  return <g><circle cx="11.500" cy="11.500" r="4.300" fill="#d3302f" /><path d="M9.800 9.800 L13.200 13.200 M13.200 9.800 L9.800 13.200" stroke="#ffffff" strokeWidth="1.300" /></g>;
}

function Taskbar() {
  return <footer className="relative h-10 flex items-stretch border-t border-[#7f7c38]/60 bg-linear-to-r from-[#aea43c] via-[#a0a154] via-50% to-[#5f9472]">
    <button aria-label="Start" className="w-[51px] flex items-center pl-[11px]">
      <svg className="w-[27px] h-[27px]" viewBox="0 0 27 27" fill="#ffffff"><path d="M0 4 L11 2.300 V13 H0Z M12 2.200 L27 0 V13 H12Z M0 14 H11 V24.700 L0 23Z M12 14 H27 V27 L12 24.800Z" /></svg>
    </button>
    <div className="flex gap-0.5">
      <TaskButton active label="File Explorer" icon={<ExplorerIcon />} />
      <TaskButton label="Google Chrome" icon={<ChromeIcon className="w-8 h-8" />} />
      <TaskButton open label="Firefox" icon={<FirefoxIcon />} />
      <TaskButton open label="PC settings" icon={<GearTile />} />
      <TaskButton label="Opera" icon={<OperaIcon className="w-8 h-8" />} />
      <TaskButton open label="7-Zip" icon={<SevenZipIcon />} />
      <TaskButton open label="Skype" icon={<SkypeIcon />} />
      <TaskButton open label="Video" icon={<CameraTile />} />
      <TaskButton open label="Photos" icon={<PhotoTile />} />
      <TaskButton open label="Notepad++" icon={<NotepadIcon />} />
      <TaskButton open label="Weather" icon={<SunTile />} />
    </div>
    <div className="ml-auto flex items-center gap-2 pr-[15px] text-white">
      <button aria-label="Action Center"><svg className="w-4 h-4" viewBox="0 0 16 16"><path d="M1.500 0.500 V15.500" stroke="#3a4b2e" strokeWidth="3" /><path d="M1.500 1 V15" stroke="#ffffff" strokeWidth="1.500" /><path d="M3 2 L7 3 H12 V9 H7 L3 8Z" fill="#ffffff" stroke="#3a4b2e" strokeWidth="0.700" /><ErrorBadge /></svg></button>
      <button aria-label="Network status"><svg className="w-4 h-4" viewBox="0 0 16 16" fill="none"><path d="M5 3 H14.500 V11 H5Z M7 14.500 H13 M10 11 V14" stroke="#3a4b2e" strokeWidth="3" /><path d="M5 3 H14.500 V11 H5Z M7 14.500 H13 M10 11 V14" stroke="#ffffff" strokeWidth="1.300" /><path d="M1.500 1.500 H5 V5 H1.500Z M3 5 V11 H5" stroke="#ffffff" strokeWidth="1.200" /></svg></button>
      <button aria-label="Volume"><svg className="w-4 h-4" viewBox="0 0 16 16"><path d="M1 6 H4 L8 2 V14 L4 10 H1Z" fill="#ffffff" stroke="#3a4b2e" strokeWidth="0.700" /><ErrorBadge /></svg></button>
      <button className="ml-1 leading-[17px] text-center">1:22 PM<br />4/10/2022</button>
    </div>
  </footer>;
}

export default function App() {
  return <div className="relative min-h-screen flex flex-col overflow-hidden font-['Open_Sans','Noto_Sans',sans-serif] text-xs">
    <Gradients />
    <Wallpaper />
    <main className="relative flex-1 flex justify-between">
      <div className="w-[78px] flex flex-col">
        <DesktopItem label="My Computer" icon={<ComputerIcon className="w-12 h-12" />} />
        <DesktopItem shortcut label="DataWagon..." icon={<DataWagonIcon className="w-12 h-12" />} />
        <DesktopItem shortcut label={"Google\nChrome"} icon={<ChromeIcon className="w-12 h-12" />} />
        <DesktopItem shortcut label="Dolphin" icon={<DolphinIcon className="w-12 h-12" />} />
        <DesktopItem label="windows" icon={<OpenFolderIcon className="w-12 h-12" />} />
        <DesktopItem shortcut label="TLauncher" icon={<GrassBlockIcon className="w-12 h-12" />} />
        <DesktopItem shortcut label={"Opera\nBrowser"} icon={<OperaIcon className="w-12 h-12" />} />
      </div>
      <div className="w-[98px] flex flex-col">
        <DesktopItem label="sydm" icon={<StuffedFolderIcon pictures className="w-12 h-12" />} />
        <DesktopItem label="x64" icon={<StuffedFolderIcon className="w-12 h-12" />} />
        <DesktopItem label="x86" icon={<StuffedFolderIcon className="w-12 h-12" />} />
        <DesktopItem label="userappdeploy" icon={<BatchIcon className="w-12 h-12" />} />
        <DesktopItem label="readme" icon={<TextFileIcon className="w-12 h-12" />} />
        <DesktopItem label="Systemwid..." icon={<BatchIcon className="w-12 h-12" />} />
        <DesktopItem label="Recycle Bin" icon={<RecycleIcon className="w-12 h-12" />} />
      </div>
      <ExplorerWindow />
    </main>
    <Taskbar />
  </div>;
}
